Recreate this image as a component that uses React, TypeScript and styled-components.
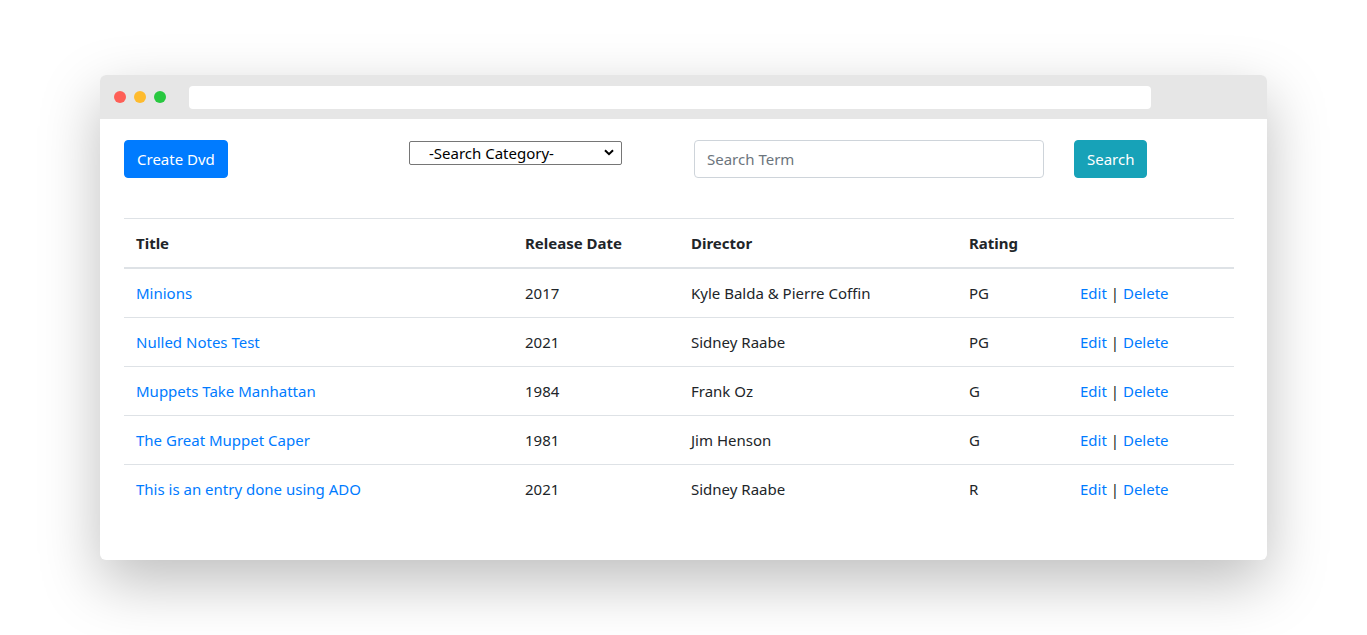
import React from "react";
import styled, { createGlobalStyle } from "styled-components";

const Global = createGlobalStyle`
  html, body { margin: 0; padding: 0; background: #ffffff; }
  body { font-family: "Noto Sans", "Open Sans", sans-serif; color: #212529; font-size: 15px; }
  * { box-sizing: border-box; }
`;

const Page = styled.div`
  padding: 75px 100px 80px 100px;
`;

const Window = styled.div`
  width: 1167px;
  background: #ffffff;
  border-radius: 6px;
  overflow: hidden;
  box-shadow: 0 22px 60px rgba(0, 0, 0, 0.26);
`;

const TitleBar = styled.div`
  height: 44px;
  background: #e6e6e6;
  display: flex;
  align-items: center;
  padding-left: 14px;
  padding-right: 116px;
`;

const Dots = styled.div`
  display: flex;
  gap: 8px;
  margin-right: 23px;
`;

const Dot = styled.span<{ $c: string }>`
  width: 12px;
  height: 12px;
  border-radius: 50%;
  background: ${(p) => p.$c};
`;

const AddressBar = styled.div`
  flex: 1;
  height: 23px;
  background: #ffffff;
  border-radius: 4px;
`;

const Content = styled.div`
  padding: 21px 33px 47px 24px;
`;

const Toolbar = styled.div`
  display: grid;
  grid-template-columns: 285px 285px 380px auto;
  align-items: start;
`;

const Button = styled.button<{ $bg: string }>`
  height: 38px;
  padding: 0 12px;
  border: 1px solid ${(p) => p.$bg};
  background: ${(p) => p.$bg};
  color: #fff;
  border-radius: 4px;
  font-family: inherit;
  font-size: 15px;
  line-height: 24px;
  justify-self: start;
  cursor: pointer;
`;

const SelectWrap = styled.div`
  position: relative;
  width: 213px;
  height: 24px;
  margin-top: 1px;
`;

const Select = styled.select`
  appearance: none;
  width: 100%;
  height: 100%;
  border: 1px solid #767676;
  border-radius: 2px;
  background: #fff;
  color: #000;
  font-family: inherit;
  font-size: 15px;
  line-height: 20px;
  padding: 0 0 0 19px;
`;

const Chevron = styled.svg`
  position: absolute;
  right: 8px;
  top: 8px;
  pointer-events: none;
`;

const Input = styled.input`
  width: 350px;
  height: 38px;
  border: 1px solid #ced4da;
  border-radius: 4px;
  padding: 6px 12px;
  font-family: inherit;
  font-size: 15px;
  color: #495057;
  &::placeholder { color: #6c757d; }
`;

const Table = styled.table`
  width: 100%;
  margin-top: 40px;
  border-collapse: collapse;
`;

const Th = styled.th<{ $w?: number }>`
  text-align: left;
  font-weight: 700;
  padding: 12px;
  line-height: 24px;
  border-top: 1px solid #dee2e6;
  border-bottom: 2px solid #dee2e6;
  width: ${(p) => (p.$w ? `${p.$w}px` : "auto")};
`;

const Td = styled.td`
  padding: 12px;
  line-height: 24px;
  border-top: 1px solid #dee2e6;
`;

const Link = styled.a`
  color: #007bff;
  text-decoration: none;
`;

const rows = [
  ["Minions", "2017", "Kyle Balda & Pierre Coffin", "PG"],
  ["Nulled Notes Test", "2021", "Sidney Raabe", "PG"],
  ["Muppets Take Manhattan", "1984", "Frank Oz", "G"],
  ["The Great Muppet Caper", "1981", "Jim Henson", "G"],
  ["This is an entry done using ADO", "2021", "Sidney Raabe", "R"],
];

export default function App() {
  return (
    <Page>
      <Global />
      <Window>
        <TitleBar>
          <Dots>
            <Dot $c="#fe5f57" />
            <Dot $c="#febb2e" />
            <Dot $c="#28c840" />
          </Dots>
          <AddressBar />
        </TitleBar>
        <Content>
          <Toolbar>
            <Button $bg="#007bff">Create Dvd</Button>
            <SelectWrap>
              <Select defaultValue="">
                <option value="">-Search Category-</option>
              </Select>
              <Chevron width="10" height="7" viewBox="0 0 10 7">
                <path d="M1 1.2 L5 5.2 L9 1.2" fill="none" stroke="#000" strokeWidth="2" />
              </Chevron>
            </SelectWrap>
            <Input placeholder="Search Term" />
            <Button $bg="#17a2b8">Search</Button>
          </Toolbar>
          <Table>
            <thead>
              <tr>
                <Th $w={389}>Title</Th>
                <Th $w={166}>Release Date</Th>
                <Th $w={278}>Director</Th>
                <Th $w={111}>Rating</Th>
                <Th></Th>
              </tr>
            </thead>
            <tbody>
              {rows.map((r) => (
                <tr key={r[0]}>
                  <Td>
                    <Link href="#">{r[0]}</Link>
                  </Td>
                  <Td>{r[1]}</Td>
                  <Td>{r[2]}</Td>
                  <Td>{r[3]}</Td>
                  <Td>
                    <Link href="#">Edit</Link> | <Link href="#">Delete</Link>
                  </Td>
                </tr>
              ))}
            </tbody>
          </Table>
        </Content>
      </Window>
    </Page>
  );
}
